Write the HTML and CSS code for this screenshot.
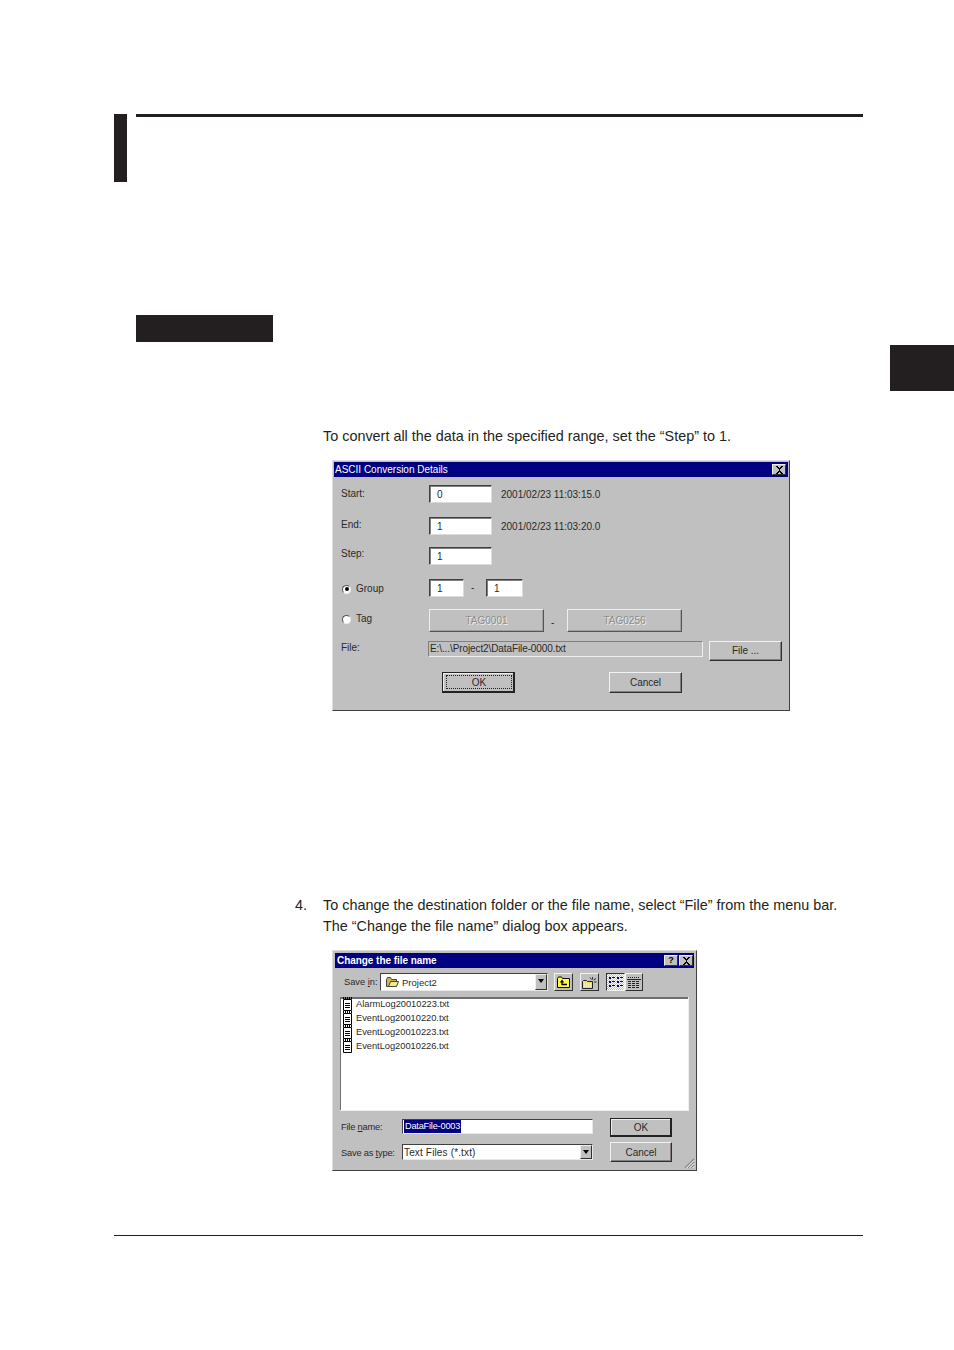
FILE: index.html
```html
<!DOCTYPE html>
<html lang="en">
<head>
<meta charset="utf-8">
<title>ASCII Conversion Details</title>
<link rel="stylesheet" href="styles.css">
</head>
<body>
<div class="page">
  <header class="chapter-head">
    <div class="chapter-bar"></div>
    <div class="chapter-rule"></div>
  </header>
  <div class="section-label"></div>
  <div class="side-tab"></div>
  <p class="para first">To convert all the data in the specified range, set the “Step” to 1.</p>

  <section class="win win-a">
    <div class="title">
      <span>ASCII Conversion Details</span>
      <span class="tbtn"><svg width="9" height="8" viewBox="0 0 9 8"><path d="M1 0h2v1h1v1h1V1h1V0h2v1H7v1H6v1H5v2h1v1h1v1h1v1H6V7H5V6H4v1H3v1H1V7h1V6h1V5h1V3H3V2H2V1H1z" fill="#000"/></svg></span>
    </div>
    <div class="rows">
      <div class="row r1">
        <span class="lab pt2">Start:</span><span class="edit w63">0</span><span class="stamp">2001/02/23 11:03:15.0</span>
      </div>
      <div class="row r2">
        <span class="lab pt1">End:</span><span class="edit w63">1</span><span class="stamp">2001/02/23 11:03:20.0</span>
      </div>
      <div class="row r3">
        <span class="lab pt0">Step:</span><span class="edit w63">1</span>
      </div>
      <div class="row r4">
        <span class="lab pt3 radio-lab"><i class="radio on"></i>Group</span><span class="edit w35">1</span><span class="dash d-small">-</span><span class="edit w37">1</span>
      </div>
      <div class="row r5">
        <span class="lab pt3 radio-lab"><i class="radio"></i>Tag</span><span class="tagbtn">TAG0001</span><span class="dash d-big">-</span><span class="tagbtn">TAG0256</span>
      </div>
      <div class="row r6">
        <span class="lab pt0 file-lab">File:</span><span class="path">E:\...\Project2\DataFile-0000.txt</span><span class="btn file-btn">File ...</span>
      </div>
      <div class="row r7">
        <span class="btn default ok-a"><span class="focus">OK</span></span><span class="btn cancel-a">Cancel</span>
      </div>
    </div>
  </section>

  <p class="para second"><span class="num">4.</span>To change the destination folder or the file name, select “File” from the menu bar.</p>
  <p class="para third">The “Change the file name” dialog box appears.</p>

  <section class="win win-b">
    <div class="title title-b">
      <span>Change the file name</span>
      <span class="tbtns">
        <span class="tbtn q">?</span>
        <span class="tbtn"><svg width="9" height="8" viewBox="0 0 9 8"><path d="M1 0h2v1h1v1h1V1h1V0h2v1H7v1H6v1H5v2h1v1h1v1h1v1H6V7H5V6H4v1H3v1H1V7h1V6h1V5h1V3H3V2H2V1H1z" fill="#000"/></svg></span>
      </span>
    </div>
    <div class="toolbar">
      <span class="tlab">Save <u>i</u>n:</span>
      <span class="combo c-top">
        <svg class="folder" width="15" height="12" viewBox="0 0 15 12"><path d="M1.500 3.500l1-2h3l1 2h5v7h-10z" fill="#c8b850" stroke="#444"/><path d="M3.500 10.500l2-5h8l-2 5z" fill="#f4ec80" stroke="#444"/></svg>
        <span>Project2</span>
        <i class="arrow"></i>
      </span>
      <span class="tool t-up"><svg width="13" height="12" viewBox="0 0 13 12"><path d="M.5 2.500l1-1.500h3l1 1.500h7v9H.5z" fill="#ffff40" stroke="#000"/><path d="M5 3.500L2.800 6.500h4.400z" fill="#000"/><path d="M5 6v2.500h5" fill="none" stroke="#000" stroke-width="1.300"/></svg></span>
      <span class="tool t-new"><svg width="15" height="13" viewBox="0 0 15 13"><path d="M.5 5.500l1-1h3l1 1h5v7H.5z" fill="#eee070" stroke="#222"/><path d="M2 8h7M2 10h7" stroke="#fff" stroke-dasharray="1 1"/><path d="M10.500 1v2.500M8 1.500l1.500 2M14 2.500l-2.500 1.500M14.500 6h-2.500" stroke="#333"/></svg></span>
      <span class="tool pressed"><svg width="14" height="11" viewBox="0 0 14 11" fill="#000080"><rect x="0" y="0" width="2" height="2"/><rect x="3" y="0" width="3" height="1"/><rect x="0" y="4" width="2" height="2"/><rect x="3" y="4" width="3" height="1"/><rect x="0" y="8" width="2" height="2"/><rect x="3" y="8" width="3" height="1"/><rect x="8" y="0" width="2" height="2"/><rect x="11" y="0" width="3" height="1"/><rect x="8" y="4" width="2" height="2"/><rect x="11" y="4" width="3" height="1"/><rect x="8" y="8" width="2" height="2"/><rect x="11" y="8" width="3" height="1"/></svg></span>
      <span class="tool t-detail"><svg width="14" height="11" viewBox="0 0 14 11"><path d="M1 .5h12" stroke="#222" stroke-dasharray="1 1"/><path d="M0 2.500h14" stroke="#222"/><path d="M1 4.500h12M1 6.500h12M1 8.500h12M1 10.500h12" stroke="#222" stroke-dasharray="3 1"/></svg></span>
    </div>
    <div class="listbox">
      <div class="file"><svg width="11" height="14" viewBox="0 0 11 14"><path d="M1.500 2.500h8v11h-8z" fill="#fff" stroke="#000"/><path d="M1 .5h9M1 1.500h9" stroke="#000" stroke-dasharray="1 1"/><path d="M3 6.500h5M3 8.500h5M3 10.500h5" stroke="#000"/></svg><span>AlarmLog20010223.txt</span></div>
      <div class="file"><svg width="11" height="14" viewBox="0 0 11 14"><path d="M1.500 2.500h8v11h-8z" fill="#fff" stroke="#000"/><path d="M1 .5h9M1 1.500h9" stroke="#000" stroke-dasharray="1 1"/><path d="M3 6.500h5M3 8.500h5M3 10.500h5" stroke="#000"/></svg><span>EventLog20010220.txt</span></div>
      <div class="file"><svg width="11" height="14" viewBox="0 0 11 14"><path d="M1.500 2.500h8v11h-8z" fill="#fff" stroke="#000"/><path d="M1 .5h9M1 1.500h9" stroke="#000" stroke-dasharray="1 1"/><path d="M3 6.500h5M3 8.500h5M3 10.500h5" stroke="#000"/></svg><span>EventLog20010223.txt</span></div>
      <div class="file"><svg width="11" height="14" viewBox="0 0 11 14"><path d="M1.500 2.500h8v11h-8z" fill="#fff" stroke="#000"/><path d="M1 .5h9M1 1.500h9" stroke="#000" stroke-dasharray="1 1"/><path d="M3 6.500h5M3 8.500h5M3 10.500h5" stroke="#000"/></svg><span>EventLog20010226.txt</span></div>
    </div>
    <div class="form-row fr1">
      <span class="flab">File <u>n</u>ame:</span>
      <span class="field f-name"><span class="sel">DataFile-0003</span></span>
      <span class="btn default b-ok">OK</span>
    </div>
    <div class="form-row fr2">
      <span class="flab">Save as <u>t</u>ype:</span>
      <span class="field f-type"><span class="type-text">Text Files (*.txt)</span><i class="arrow"></i></span>
      <span class="btn b-cancel">Cancel</span>
    </div>
    <svg class="grip" width="11" height="11" viewBox="0 0 11 11"><path d="M10 1L1 10M10 4L4 10M10 7L7 10" stroke="#808080" stroke-width="1.200"/><path d="M10 2.500L2.500 10M10 5.500L5.500 10M10 8.500L8.500 10" stroke="#fff"/></svg>
  </section>

  <div class="foot-rule"></div>
</div>
</body>
</html>
```

FILE: styles.css
```css
* { box-sizing: border-box; }
html, body { margin: 0; padding: 0; background: #fff; }
body { font-family: "Liberation Sans", Arial, sans-serif; color: #231f20; }
.page { width: 954px; height: 1350px; overflow: hidden; padding-top: 114px; }

.chapter-head { display: flex; margin-left: 114px; width: 749px; height: 68px; }
.chapter-bar { width: 13px; height: 68px; background: #231f20; }
.chapter-rule { flex: 1; margin-left: 9px; height: 3px; background: #231f20; }
.section-label { width: 137px; height: 27px; margin: 133px 0 0 136px; background: #231f20; }
.side-tab { width: 64px; height: 46px; margin: 3px 0 0 auto; background: #231f20; }

.para { margin: 0 0 0 323px; font-size: 14.400px; line-height: 21px; white-space: nowrap; }
.para.first { margin-top: 35px; }
.para.second { margin-top: 184px; margin-left: 295px; }
.para.third { margin-top: 0; }
.num { display: inline-block; width: 28px; }

.win { background: #c0c0c0; border: 1px solid; border-color: #dcdcdc #404040 #404040 #dcdcdc; color: #2a2a2a; font-size: 10px; position: relative; }
.win-a { width: 458px; height: 251px; margin: 13px 0 0 332px; padding: 1px; }
.win-b { width: 365px; height: 221px; margin: 13px 0 0 332px; padding: 2px; }
.title { display: flex; justify-content: space-between; align-items: center; height: 15px; padding: 0 2px 0 1px; background: #000080; color: #fff; font-size: 10px; }
.title-b { font-weight: 700; padding-left: 2px; padding-right: 1px; letter-spacing: -.05px; }
.tbtns { display: flex; gap: 1px; }
.tbtn { display: flex; align-items: center; justify-content: center; width: 14px; height: 11px; background: #c0c0c0; color: #000; border: 1px solid; border-color: #eee #303030 #303030 #eee; }
.tbtn.q { font-size: 9px; font-weight: 700; line-height: 9px; }

.rows { padding-left: 7px; }
.row { display: flex; align-items: flex-start; }
.r1 { margin-top: 8px; height: 18px; }
.r2 { margin-top: 14px; height: 18px; }
.r3 { margin-top: 12px; height: 18px; }
.r4 { margin-top: 14px; height: 18px; }
.r5 { margin-top: 12px; height: 23px; }
.r6 { margin-top: 9px; height: 20px; }
.r7 { margin-top: 11px; height: 21px; padding-left: 101px; }

.lab { width: 88px; height: 12px; line-height: 12px; flex: none; }
.pt0 { margin-top: 1px; }
.pt1 { margin-top: 2px; }
.pt2 { margin-top: 3px; }
.pt3 { margin-top: 4px; }
.radio-lab { display: flex; align-items: center; }
.radio { width: 9px; height: 9px; margin: 0 5px 0 1px; border-radius: 50%; background: #fff; border: 1px solid; border-color: #555 #eee #eee #555; position: relative; }
.radio.on::after { content: ""; position: absolute; left: 1.500px; top: 1.500px; width: 4px; height: 4px; border-radius: 50%; background: #000; }
.edit { display: block; height: 18px; line-height: 17px; padding-left: 7px; background: #fff; border: 1px solid; border-color: #404040 #dcdcdc #dcdcdc #404040; box-shadow: inset 1px 1px 0 #808080; }
.w63 { width: 63px; }
.w35 { width: 35px; }
.w37 { width: 37px; }
.stamp { margin-left: 9px; line-height: 18px; padding-top: 1px; }
.dash { display: block; line-height: 18px; }
.d-small { width: 22px; padding-left: 7px; }
.d-big { width: 23px; padding-left: 7px; margin-top: 5px; }
.tagbtn { display: block; width: 115px; height: 23px; line-height: 22px; text-align: center; color: #8e8e8e; text-shadow: 1px 1px 0 #efefef; border: 1px solid; border-color: #eee #555 #555 #eee; box-shadow: inset -1px -1px 0 #a0a0a0; }
.file-lab { width: 87px; }
.path { display: block; width: 275px; height: 16px; line-height: 14px; padding-left: 1px; white-space: nowrap; border: 1px solid; border-color: #808080 #eee #eee #808080; letter-spacing: -.1px; }
.btn { display: flex; align-items: center; justify-content: center; background: #c0c0c0; border: 1px solid; border-color: #f2f2f2 #303030 #303030 #f2f2f2; box-shadow: inset -1px -1px 0 #808080; flex: none; }
.file-btn { width: 73px; height: 20px; margin-left: 6px; padding-bottom: 2px; }
.default { border: 1px solid #222; box-shadow: inset -1px -1px 0 #222, inset 1px 1px 0 #eee; }
.ok-a { width: 73px; height: 21px; padding: 2px 2px 3px 3px; }
.focus { display: flex; width: 100%; height: 100%; align-items: center; justify-content: center; border: 1px dotted #222; }
.cancel-a { width: 73px; height: 21px; margin-left: 94px; }

.toolbar { display: flex; align-items: flex-start; margin-top: 5px; padding-left: 9px; height: 18px; }
.tlab { width: 36px; line-height: 18px; font-size: 9.300px; flex: none; }
.combo { display: flex; align-items: center; width: 168px; height: 18px; background: #fff; border: 1px solid; border-color: #404040 #e8e8e8 #e8e8e8 #404040; padding-left: 4px; font-size: 9.500px; }
.combo .folder { margin-right: 2px; }
.arrow { display: block; margin-left: auto; width: 12px; height: 100%; flex: none; background: #c0c0c0; border: 1px solid; border-color: #eee #303030 #303030 #eee; position: relative; }
.arrow::after { content: ""; position: absolute; left: 2px; top: 4px; border: 3px solid transparent; border-top: 4px solid #000; border-bottom: 0; }
.tool { display: flex; align-items: center; justify-content: center; width: 19px; height: 18px; margin-left: 7px; background: #c0c0c0; border: 1px solid; border-color: #f2f2f2 #303030 #303030 #f2f2f2; flex: none; }
.t-up { margin-left: 6px; }
.pressed { background: repeating-conic-gradient(#fff 0 25%, #c0c0c0 0 50%) 0 0 / 2px 2px; border-color: #303030 #f2f2f2 #f2f2f2 #303030; }
.t-detail { width: 18px; margin-left: 0; }

.listbox { width: 349px; height: 114px; margin: 6px 0 0 5px; background: #fff; border-right: 1px solid #eee; border-bottom: 1px solid #eee; box-shadow: inset 1px 2px 0 #707070; }
.file { display: flex; align-items: center; height: 14px; padding-left: 2px; font-size: 9.300px; letter-spacing: -.02px; }
.file svg { flex: none; margin-right: 3px; }

.form-row { display: flex; align-items: flex-start; padding-left: 6px; }
.fr1 { margin-top: 7px; height: 19px; }
.fr2 { margin-top: 5px; height: 20px; }
.flab { width: 61px; flex: none; font-size: 9.300px; letter-spacing: -.2px; white-space: nowrap; line-height: 18px; }
.fr2 .flab { line-height: 22px; }
.field { display: flex; align-items: center; width: 191px; background: #fff; border: 1px solid; border-color: #404040 #e8e8e8 #e8e8e8 #404040; flex: none; }
.f-name { height: 15px; margin-top: 1px; padding-left: 1px; }
.f-type { height: 16px; margin-top: 2px; padding-left: 1px; }
.sel { background: #000080; color: #fff; font-size: 9.200px; line-height: 13px; padding: 0 1px; letter-spacing: -.2px; }
.type-text { letter-spacing: .15px; }
.b-ok { width: 62px; height: 19px; margin-left: 17px; }
.b-cancel { width: 62px; height: 20px; margin-left: 17px; }
.grip { position: absolute; right: 1px; bottom: 1px; }

.foot-rule { width: 749px; height: 1px; margin: 64px 0 0 114px; background: #231f20; }
```
